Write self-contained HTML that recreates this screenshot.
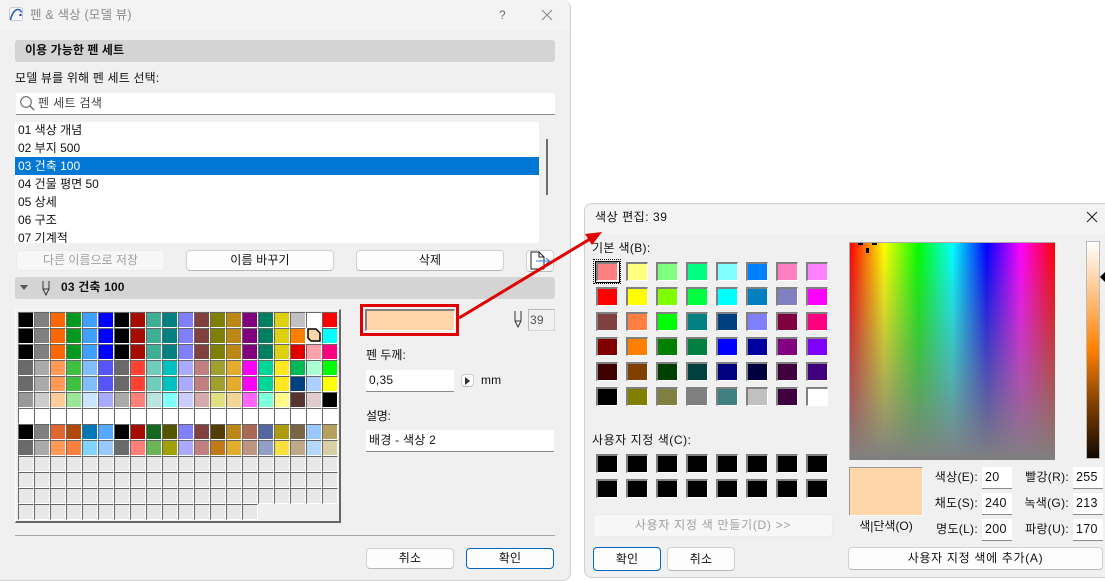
<!DOCTYPE html>
<html lang="ko"><head><meta charset="utf-8"><title>펜 &amp; 색상</title>
<style>
html,body{margin:0;padding:0;width:1105px;height:581px;overflow:hidden;background:#fff}
body{position:relative;font-family:"Liberation Sans","Noto Sans CJK KR",sans-serif;font-size:12px;color:#111}
div,span,svg{position:absolute;box-sizing:border-box}
.t{white-space:nowrap;line-height:16px;letter-spacing:.17px}
.r{letter-spacing:.55px}
.bar{background:#d4d4d4;border-radius:3px}
.in{background:#fff;border-bottom:1px solid #8a8a8a;white-space:nowrap;line-height:20px;padding-left:3px;letter-spacing:.25px}
.btn{background:#fdfdfd;border:1px solid #d0d0d0;border-bottom-color:#b8b8b8;border-radius:4px;text-align:center;line-height:19px;letter-spacing:.15px;white-space:nowrap}
.row{left:3px;white-space:nowrap;line-height:18px;height:18px;letter-spacing:0}
.g{display:grid;grid-template-columns:repeat(20,16px);grid-auto-rows:16px;left:18px;top:312px}
.g i{display:block;box-sizing:border-box;border-top:1px solid #666;border-left:1px solid #666;border-right:1px solid #fff;border-bottom:1px solid #fff}
.s{display:grid;grid-template-columns:repeat(8,22px);grid-auto-rows:19px;column-gap:8px;row-gap:6px;left:596px}
.s i{display:block;box-sizing:border-box;border-top:2px solid #808080;border-left:2px solid #808080;border-right:1px solid #fff;border-bottom:1px solid #fff}
.f{background:#fff;border-bottom:1px solid #8a8a8a;width:30px;height:22px;line-height:20px;padding-left:3px;letter-spacing:.3px;font-size:12.5px}
.lb{white-space:nowrap;line-height:16px;text-align:right;width:70px;letter-spacing:.3px}
</style></head><body>

<!-- main dialog -->
<div style="left:0;top:0;width:571px;height:581px;background:#f0f0f0;border:1px solid #cfcfcf;border-left:0;border-top:0;border-radius:0 8px 8px 0"></div>
<div style="left:0;top:0;width:570px;height:30px;background:#f3f3f3;border-radius:0 8px 0 0"></div>
<svg style="left:9px;top:7px" width="15" height="15" viewBox="0 0 15 15"><rect x=".5" y=".5" width="13" height="13" rx="2" fill="#f6f8fc" stroke="#c4cde0"/><path d="M1.5 13C3 6 6 2.5 9 2.5c2 0 3 1.5 3.6 3" fill="none" stroke="#2a5fc0" stroke-width="1.6"/><rect x="10.5" y="7" width="2" height="2" fill="#1d3a80"/></svg>
<div class="t" style="left:30px;top:7px;color:#8c8c8c;font-size:12.5px">펜 &amp; 색상 (모델 뷰)</div>
<div class="t" style="left:499px;top:7px;color:#6a6a6a;font-size:12px">?</div>
<svg style="left:541px;top:9px" width="12" height="12" viewBox="0 0 12 12"><path d="M1 1L11 11M11 1L1 11" stroke="#8a8a8a" stroke-width="1.1"/></svg>

<div class="bar" style="left:15px;top:40px;width:540px;height:22px"></div>
<div class="t" style="left:25px;top:42px;font-weight:bold;letter-spacing:.07px">이용 가능한 펜 세트</div>
<div class="t" style="left:15px;top:70px">모델 뷰를 위해 펜 세트 선택:</div>

<div class="in" style="left:16px;top:93px;width:539px;height:22px;padding-left:22px;color:#444;line-height:20px;letter-spacing:.35px">펜 세트 검색</div>
<svg style="left:19px;top:95px" width="16" height="16" viewBox="0 0 16 16"><circle cx="7" cy="7" r="5.3" fill="none" stroke="#666" stroke-width="1.1"/><path d="M11 11L15 15" stroke="#666" stroke-width="1.3"/></svg>

<div style="left:15px;top:122px;width:524px;height:121px;background:#fff;overflow:hidden">
<div class="row" style="top:-1px">01 색상 개념</div>
<div class="row" style="top:17px">02 부지 500</div>
<div style="left:0;top:35px;width:524px;height:18px;background:#0078d4"></div>
<div class="row" style="top:35px;color:#fff">03 건축 100</div>
<div class="row" style="top:53px">04 건물 평면 50</div>
<div class="row" style="top:71px">05 상세</div>
<div class="row" style="top:89px">06 구조</div>
<div class="row" style="top:107px">07 기계적</div>
</div>
<div style="left:546px;top:139px;width:2px;height:56px;background:#6e6e6e"></div>

<div class="btn" style="left:16px;top:250px;width:149px;height:21px;color:#a0a0a0;background:#f7f7f7;border-color:#ececec;letter-spacing:0">다른 이름으로 저장</div>
<div class="btn" style="left:186px;top:250px;width:148px;height:21px">이름 바꾸기</div>
<div class="btn" style="left:356px;top:250px;width:148px;height:21px">삭제</div>
<div class="btn" style="left:526px;top:250px;width:28px;height:22px"></div>
<svg style="left:529px;top:251px" width="26" height="20" viewBox="0 0 26 20"><path d="M2 1H10L15 6V18H2Z M10 1V6H15" fill="#fff" stroke="#222" stroke-width="1"/><path d="M7 10H20M17 7L20.500 10L17 13" fill="none" stroke="#2f7fe0" stroke-width="1"/></svg>

<div class="bar" style="left:15px;top:277px;width:540px;height:22px"></div>
<svg style="left:20px;top:285px" width="9" height="6" viewBox="0 0 9 6"><path d="M0 0H8L4 5Z" fill="#555"/></svg>
<svg style="left:41px;top:280px" width="10" height="16" viewBox="0 0 10 16"><path d="M2 1V9L5 15L8 9V1M2 9H8" fill="none" stroke="#333" stroke-width="1"/></svg>
<div class="t" style="left:61px;top:279px;font-weight:bold">03 건축 100</div>

<!-- pen palette -->
<div style="left:15px;top:309px;width:326px;height:214px;background:#efefef;border:1px solid #fafafa;border-right:2px solid #666;border-bottom:2px solid #666;border-top:1px solid #f8f8f8"></div>
<div class="g">
<i style="background:#000"></i><i style="background:#808080"></i><i style="background:#f60"></i><i style="background:#092"></i><i style="background:#3fa0ff"></i><i style="background:#00f"></i><i style="background:#000"></i><i style="background:#a60c00"></i><i style="background:#3fae99"></i><i style="background:#008080"></i><i style="background:#8080ff"></i><i style="background:#804040"></i><i style="background:#808000"></i><i style="background:#bb8817"></i><i style="background:#800080"></i><i style="background:#008060"></i><i style="background:#ddd010"></i><i style="background:#c0c0c0"></i><i style="background:#fff"></i><i style="background:#f00"></i>
<i style="background:#000"></i><i style="background:#808080"></i><i style="background:#f60"></i><i style="background:#092"></i><i style="background:#3fa0ff"></i><i style="background:#00f"></i><i style="background:#000"></i><i style="background:#a60c00"></i><i style="background:#3fae99"></i><i style="background:#008080"></i><i style="background:#8080ff"></i><i style="background:#804040"></i><i style="background:#808000"></i><i style="background:#bb8817"></i><i style="background:#800080"></i><i style="background:#008060"></i><i style="background:#ddd010"></i><i style="background:#ff8000"></i><i style="background:#fff;border-color:#fff"></i><i style="background:#0ff"></i>
<i style="background:#000"></i><i style="background:#808080"></i><i style="background:#f60"></i><i style="background:#092"></i><i style="background:#3fa0ff"></i><i style="background:#00f"></i><i style="background:#000"></i><i style="background:#a60c00"></i><i style="background:#3fae99"></i><i style="background:#008080"></i><i style="background:#8080ff"></i><i style="background:#804040"></i><i style="background:#808000"></i><i style="background:#bb8817"></i><i style="background:#800080"></i><i style="background:#008060"></i><i style="background:#ddd010"></i><i style="background:#e00000"></i><i style="background:#ffa0aa"></i><i style="background:#ff0080"></i>
<i style="background:#6a6a6a"></i><i style="background:#aaa"></i><i style="background:#f95"></i><i style="background:#40c040"></i><i style="background:#80bfff"></i><i style="background:#55f"></i><i style="background:#6a6a6a"></i><i style="background:#ff4436"></i><i style="background:#70ccbb"></i><i style="background:#00c0c0"></i><i style="background:#aaf"></i><i style="background:#c08080"></i><i style="background:#a0a030"></i><i style="background:#e3ac2a"></i><i style="background:#f0f"></i><i style="background:#00d59a"></i><i style="background:#ffe822"></i><i style="background:#00b858"></i><i style="background:#aaffd5"></i><i style="background:#0f0"></i>
<i style="background:#6a6a6a"></i><i style="background:#aaa"></i><i style="background:#f95"></i><i style="background:#40c040"></i><i style="background:#80bfff"></i><i style="background:#55f"></i><i style="background:#6a6a6a"></i><i style="background:#ff4436"></i><i style="background:#70ccbb"></i><i style="background:#00c0c0"></i><i style="background:#aaf"></i><i style="background:#c08080"></i><i style="background:#a0a030"></i><i style="background:#e3ac2a"></i><i style="background:#f0f"></i><i style="background:#00d59a"></i><i style="background:#ffe822"></i><i style="background:#004080"></i><i style="background:#aad0ff"></i><i style="background:#ff0"></i>
<i style="background:#999"></i><i style="background:#ccc"></i><i style="background:#fc9"></i><i style="background:#9ae596"></i><i style="background:#cce5ff"></i><i style="background:#aaf"></i><i style="background:#aaa"></i><i style="background:#ff8077"></i><i style="background:#b8e5e0"></i><i style="background:#80ffff"></i><i style="background:#ccf"></i><i style="background:#d5aaaa"></i><i style="background:#e0e080"></i><i style="background:#f2d595"></i><i style="background:#f6f"></i><i style="background:#80ffdd"></i><i style="background:#fffa88"></i><i style="background:#533"></i><i style="background:#e0cccc"></i><i style="background:#000"></i>
<i style="background:#fff"></i><i style="background:#fff"></i><i style="background:#fff"></i><i style="background:#fff"></i><i style="background:#fff"></i><i style="background:#fff"></i><i style="background:#fff"></i><i style="background:#fff"></i><i style="background:#fff"></i><i style="background:#fff"></i><i style="background:#fff"></i><i style="background:#fff"></i><i style="background:#fff"></i><i style="background:#fff"></i><i style="background:#fff"></i><i style="background:#fff"></i><i style="background:#fff"></i><i style="background:#fff"></i><i style="background:#fff"></i><i style="background:#fff"></i>
<i style="background:#000"></i><i style="background:#808080"></i><i style="background:#e06630"></i><i style="background:#b04a0a"></i><i style="background:#0078b8"></i><i style="background:#5af"></i><i style="background:#000"></i><i style="background:#a60c00"></i><i style="background:#156820"></i><i style="background:#550"></i><i style="background:#8080ff"></i><i style="background:#804040"></i><i style="background:#553d0a"></i><i style="background:#bb8817"></i><i style="background:#a86a55"></i><i style="background:#5566a0"></i><i style="background:#b09a10"></i><i style="background:#7a6545"></i><i style="background:#99c8ff"></i><i style="background:#b5a25e"></i>
<i style="background:#6a6a6a"></i><i style="background:#aaa"></i><i style="background:#f95"></i><i style="background:#f58040"></i><i style="background:#80d5ff"></i><i style="background:#99c8ff"></i><i style="background:#6a6a6a"></i><i style="background:#ff8077"></i><i style="background:#6ab555"></i><i style="background:#a0a000"></i><i style="background:#aaf"></i><i style="background:#c08080"></i><i style="background:#c07a1a"></i><i style="background:#e3ac2a"></i><i style="background:#c09580"></i><i style="background:#90a0c8"></i><i style="background:#f8e040"></i><i style="background:#c0a888"></i><i style="background:#b5d8ff"></i><i style="background:#d8cfa5"></i>
<i style="background:#e8e8e8"></i><i style="background:#e8e8e8"></i><i style="background:#e8e8e8"></i><i style="background:#e8e8e8"></i><i style="background:#e8e8e8"></i><i style="background:#e8e8e8"></i><i style="background:#e8e8e8"></i><i style="background:#e8e8e8"></i><i style="background:#e8e8e8"></i><i style="background:#e8e8e8"></i><i style="background:#e8e8e8"></i><i style="background:#e8e8e8"></i><i style="background:#e8e8e8"></i><i style="background:#e8e8e8"></i><i style="background:#e8e8e8"></i><i style="background:#e8e8e8"></i><i style="background:#e8e8e8"></i><i style="background:#e8e8e8"></i><i style="background:#e8e8e8"></i><i style="background:#e8e8e8"></i>
<i style="background:#e8e8e8"></i><i style="background:#e8e8e8"></i><i style="background:#e8e8e8"></i><i style="background:#e8e8e8"></i><i style="background:#e8e8e8"></i><i style="background:#e8e8e8"></i><i style="background:#e8e8e8"></i><i style="background:#e8e8e8"></i><i style="background:#e8e8e8"></i><i style="background:#e8e8e8"></i><i style="background:#e8e8e8"></i><i style="background:#e8e8e8"></i><i style="background:#e8e8e8"></i><i style="background:#e8e8e8"></i><i style="background:#e8e8e8"></i><i style="background:#e8e8e8"></i><i style="background:#e8e8e8"></i><i style="background:#e8e8e8"></i><i style="background:#e8e8e8"></i><i style="background:#e8e8e8"></i>
<i style="background:#e8e8e8"></i><i style="background:#e8e8e8"></i><i style="background:#e8e8e8"></i><i style="background:#e8e8e8"></i><i style="background:#e8e8e8"></i><i style="background:#e8e8e8"></i><i style="background:#e8e8e8"></i><i style="background:#e8e8e8"></i><i style="background:#e8e8e8"></i><i style="background:#e8e8e8"></i><i style="background:#e8e8e8"></i><i style="background:#e8e8e8"></i><i style="background:#e8e8e8"></i><i style="background:#e8e8e8"></i><i style="background:#e8e8e8"></i><i style="background:#e8e8e8"></i><i style="background:#e8e8e8"></i><i style="background:#e8e8e8"></i><i style="background:#e8e8e8"></i><i style="background:#e8e8e8"></i>
<i style="background:#e8e8e8"></i><i style="background:#e8e8e8"></i><i style="background:#e8e8e8"></i><i style="background:#e8e8e8"></i><i style="background:#e8e8e8"></i><i style="background:#e8e8e8"></i><i style="background:#e8e8e8"></i><i style="background:#e8e8e8"></i><i style="background:#e8e8e8"></i><i style="background:#e8e8e8"></i><i style="background:#e8e8e8"></i><i style="background:#e8e8e8"></i><i style="background:#e8e8e8"></i><i style="background:#e8e8e8"></i><i style="background:#e8e8e8"></i>
</div>
<svg style="left:307px;top:328px" width="15" height="15" viewBox="0 0 15 15"><path d="M1 1H9L13 5V13H4L1 10Z" fill="#ffd5aa" stroke="#000" stroke-width="1.500"/></svg>

<!-- pen detail -->
<div style="left:360px;top:304px;width:99px;height:32px;border:3px solid #e00000"></div>
<div style="left:365px;top:309px;width:90px;height:22px;background:#ffd5aa;border-top:2px solid #808080;border-left:2px solid #808080;border-right:1px solid #fff;border-bottom:1px solid #fff"></div>
<svg style="left:513px;top:310px" width="10" height="18" viewBox="0 0 10 18"><path d="M2 1V11L5 17L8 11V1M2 11H8" fill="none" stroke="#333" stroke-width="1"/></svg>
<div class="t" style="left:528px;top:309px;width:27px;height:22px;border:1px solid #d8d8d8;border-top-color:#bbb;border-left-color:#bbb;padding-left:1px;line-height:20px;color:#555">39</div>
<div class="t" style="left:366px;top:347px;letter-spacing:0">펜 두께:</div>
<div class="in" style="left:366px;top:370px;width:88px;height:22px">0,35</div>
<div class="btn" style="left:461px;top:374px;width:13px;height:13px"></div>
<svg style="left:465px;top:377px" width="6" height="8" viewBox="0 0 6 8"><path d="M0 0L5 4L0 8Z" fill="#333"/></svg>
<div class="t" style="left:481px;top:372px">mm</div>
<div class="t" style="left:366px;top:408px;letter-spacing:-.3px">설명:</div>
<div class="in" style="left:366px;top:430px;width:188px;height:22px">배경 - 색상 2</div>

<div style="left:15px;top:535px;width:540px;height:1px;background:#a8a8a8"></div>
<div class="btn" style="left:366px;top:548px;width:88px;height:21px">취소</div>
<div class="btn" style="left:466px;top:548px;width:88px;height:21px;border:1px solid #0067c0">확인</div>

<!-- color dialog -->
<div style="left:584px;top:203px;width:521px;height:375px;background:#f0f0f0;border:1px solid #cfcfcf;border-right:0;border-radius:8px 0 0 8px"></div>
<div style="left:585px;top:204px;width:520px;height:30px;background:#f3f3f3;border-radius:8px 0 0 0"></div>
<div class="t r" style="left:595px;top:209px">색상 편집: 39</div>
<svg style="left:1086px;top:211px" width="12" height="12" viewBox="0 0 12 12"><path d="M1 1L11 11M11 1L1 11" stroke="#222" stroke-width="1.100"/></svg>
<div class="t" style="left:592px;top:240px;letter-spacing:.35px">기본 색(B):</div>
<div style="left:593px;top:259px;width:28px;height:25px;border:1px dotted #000"></div>
<div style="left:595px;top:261px;width:25px;height:22px;border:1px solid #000"></div>
<div class="s" style="top:262px">
<i style="background:#ff8080"></i><i style="background:#ffff80"></i><i style="background:#80ff80"></i><i style="background:#00ff80"></i><i style="background:#80ffff"></i><i style="background:#0080ff"></i><i style="background:#ff80c0"></i><i style="background:#ff80ff"></i>
<i style="background:#f00"></i><i style="background:#ff0"></i><i style="background:#80ff00"></i><i style="background:#00ff40"></i><i style="background:#0ff"></i><i style="background:#0080c0"></i><i style="background:#8080c0"></i><i style="background:#f0f"></i>
<i style="background:#804040"></i><i style="background:#ff8040"></i><i style="background:#0f0"></i><i style="background:#008080"></i><i style="background:#004080"></i><i style="background:#8080ff"></i><i style="background:#800040"></i><i style="background:#ff0080"></i>
<i style="background:#800000"></i><i style="background:#ff8000"></i><i style="background:#008000"></i><i style="background:#008040"></i><i style="background:#00f"></i><i style="background:#0000a0"></i><i style="background:#800080"></i><i style="background:#8000ff"></i>
<i style="background:#400000"></i><i style="background:#804000"></i><i style="background:#004000"></i><i style="background:#004040"></i><i style="background:#000080"></i><i style="background:#000040"></i><i style="background:#400040"></i><i style="background:#400080"></i>
<i style="background:#000"></i><i style="background:#808000"></i><i style="background:#808040"></i><i style="background:#808080"></i><i style="background:#408080"></i><i style="background:#c0c0c0"></i><i style="background:#400040"></i><i style="background:#fff"></i>
</div>
<div class="t r" style="left:592px;top:432px">사용자 지정 색(C):</div>
<div class="s" style="top:454px">
<i style="background:#000"></i><i style="background:#000"></i><i style="background:#000"></i><i style="background:#000"></i><i style="background:#000"></i><i style="background:#000"></i><i style="background:#000"></i><i style="background:#000"></i>
<i style="background:#000"></i><i style="background:#000"></i><i style="background:#000"></i><i style="background:#000"></i><i style="background:#000"></i><i style="background:#000"></i><i style="background:#000"></i><i style="background:#000"></i>
</div>
<div class="btn" style="left:593px;top:514px;width:240px;height:23px;color:#a0a0a0;background:#f7f7f7;border-color:#ececec;line-height:21px;letter-spacing:.72px">사용자 지정 색 만들기(D) &gt;&gt;</div>
<div class="btn" style="left:593px;top:547px;width:68px;height:24px;border:1px solid #0067c0;line-height:22px">확인</div>
<div class="btn" style="left:667px;top:547px;width:68px;height:24px;line-height:22px">취소</div>

<div style="left:849px;top:242px;width:206px;height:218px;border-top:1px solid #aaa;border-left:1px solid #aaa;background:linear-gradient(to bottom,rgba(128,128,128,0),rgba(128,128,128,1)),linear-gradient(to right,#f00,#ff0 16.7%,#0f0 33.3%,#0ff 50%,#00f 66.7%,#f0f 83.3%,#f00)"></div>
<div style="left:858px;top:243px;width:5px;height:2px;background:#000"></div>
<div style="left:872px;top:243px;width:5px;height:2px;background:#000"></div>
<div style="left:866px;top:248px;width:3px;height:5px;background:#000"></div>
<div style="left:1086px;top:241px;width:14px;height:218px;border:1px solid #bbb;background:linear-gradient(to bottom,#fff 0,#ffd5aa 17%,#ff8000 50%,#804000 75%,#100800 100%)"></div>
<svg style="left:1100px;top:272px" width="5" height="10" viewBox="0 0 5 10"><path d="M0 5L5 0V10Z" fill="#000"/></svg>

<div style="left:849px;top:467px;width:74px;height:49px;background:#ffd5aa;border-top:1px solid #999;border-left:1px solid #999;border-right:1px solid #fff;border-bottom:1px solid #fff"></div>
<div class="t" style="left:849px;top:518px;width:74px;text-align:center;letter-spacing:0">색|단색(O)</div>

<div class="lb" style="left:908px;top:469px">색상(E):</div><div class="f" style="left:982px;top:467px">20</div>
<div class="lb" style="left:908px;top:495px">채도(S):</div><div class="f" style="left:982px;top:493px">240</div>
<div class="lb" style="left:908px;top:521px">명도(L):</div><div class="f" style="left:982px;top:519px">200</div>
<div class="lb" style="left:999px;top:469px">빨강(R):</div><div class="f" style="left:1073px;top:467px">255</div>
<div class="lb" style="left:999px;top:495px">녹색(G):</div><div class="f" style="left:1073px;top:493px">213</div>
<div class="lb" style="left:999px;top:521px">파랑(U):</div><div class="f" style="left:1073px;top:519px">170</div>
<div class="btn" style="left:848px;top:547px;width:255px;height:23px;line-height:21px;letter-spacing:.68px">사용자 지정 색에 추가(A)</div>

<!-- arrow -->
<svg style="left:0;top:0" width="1105" height="581" viewBox="0 0 1105 581"><path d="M459 318L590 239" stroke="#e00000" stroke-width="3" fill="none"/><path d="M602 232L585 234L592 245Z" fill="#e00000"/></svg>
</body></html>
